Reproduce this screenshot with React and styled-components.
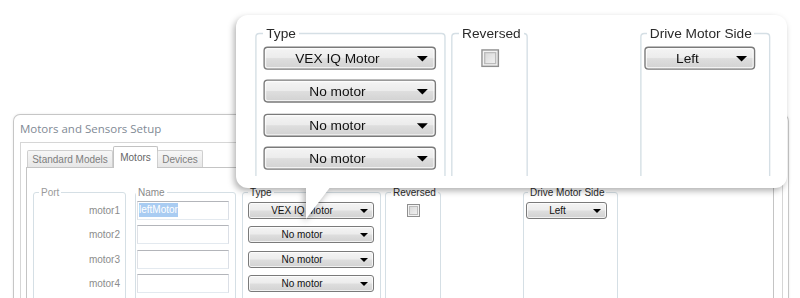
import React from 'react';
import styled, { createGlobalStyle } from 'styled-components';

const GlobalStyle = createGlobalStyle`
  html, body { margin: 0; padding: 0; background: #fff; }
  body { font-family: "Liberation Sans", Arial, sans-serif; }
`;

const Stage = styled.div`
  position: relative;
  width: 800px;
  height: 298px;
  overflow: hidden;
  background: #fff;
  box-sizing: border-box;
  padding: 114px 0 0 13px;
`;

const Dialog = styled.div`
  box-sizing: border-box;
  width: 776px;
  height: 230px;
  border: 1px solid #c6c6c6;
  border-bottom: none;
  border-radius: 7px 7px 0 0;
  background: #fff;
  padding: 0 5px 0 6px;
  box-shadow: 0 0 3px rgba(0, 0, 0, 0.08);
  display: flex;
  flex-direction: column;
`;

const Title = styled.div`
  height: 27px;
  display: flex;
  align-items: center;
  font-family: "Open Sans", "Noto Sans", sans-serif;
  font-size: 11.5px;
  color: #7f8a95;
`;

const Frame = styled.div`
  flex: 1;
  display: flex;
  flex-direction: column;
  border: 1px solid #d6d6d6;
  padding: 3px 8px 0 5px;
  background: #fff;
`;

const TabStrip = styled.div`
  display: flex;
  align-items: flex-end;
  height: 21px;
  padding-left: 1px;
  position: relative;
  z-index: 1;
`;

const Tab = styled.div`
  box-sizing: border-box;
  width: ${(p) => p.$w}px;
  height: ${(p) => (p.$active ? 22 : 17)}px;
  margin-bottom: ${(p) => (p.$active ? -1 : 0)}px;
  margin-left: ${(p) => p.$ml || 0}px;
  border: 1px solid ${(p) => (p.$active ? '#c2c2c2' : '#cfcfcf')};
  border-bottom: none;
  border-radius: 2px 2px 0 0;
  background: ${(p) => (p.$active ? '#fff' : 'linear-gradient(#f7f7f7, #e7e7e7)')};
  color: ${(p) => (p.$active ? '#666' : '#7e7e7e')};
  font-size: 10px;
  display: flex;
  justify-content: center;
  align-items: ${(p) => (p.$active ? 'flex-start' : 'center')};
  padding-top: ${(p) => (p.$active ? 5 : 0)}px;
  white-space: nowrap;
`;

const Panel = styled.div`
  flex: 1;
  border: 1px solid #c4c4c4;
  background: #fff;
  padding: 19px 0 0 6px;
`;

const GroupRow = styled.div`
  display: flex;
  align-items: flex-start;
`;

const Group = styled.fieldset`
  box-sizing: border-box;
  margin: 0 0 0 ${(p) => p.$ml || 0}px;
  padding: 0;
  width: ${(p) => p.$w}px;
  height: 140px;
  min-width: 0;
  border: 1px solid #d5dfe5;
  border-radius: 3px;
`;

const Legend = styled.legend`
  margin-left: ${(p) => (p.$indent ?? 5)}px;
  padding: 0 2px;
  font-size: 10px;
  line-height: 11px;
  color: ${(p) => p.$color || '#2a2a2a'};
`;

const GroupBody = styled.div`
  display: grid;
  grid-auto-rows: 24.5px;
  align-items: center;
  justify-items: ${(p) => p.$justify || 'start'};
  padding: 0 ${(p) => p.$pr || 0}px 0 ${(p) => p.$pl || 0}px;
`;

const PortLabel = styled.span`
  font-size: 10px;
  color: #8c8c8c;
`;

const TextBox = styled.div`
  box-sizing: border-box;
  width: 92px;
  height: 19px;
  border: 1px solid;
  border-color: #b3b5ba #dbdfe6 #e3e9ef #dfe1e6;
  background: #fff;
  padding: 0 1px;
  display: flex;
  align-items: center;
  font-size: 10px;
`;

const Selection = styled.span`
  background: #a9ccf2;
  color: #fff;
  line-height: 14px;
`;

const Select = styled.div`
  box-sizing: border-box;
  width: ${(p) => p.$w}px;
  height: 17px;
  display: flex;
  align-items: center;
  border: 1px solid #7a7a7a;
  border-radius: 3px;
  background: linear-gradient(to bottom, #f4f4f4 0%, #ececec 48%, #dedede 52%, #d2d2d2 100%);
  box-shadow: inset 0 0 0 1px rgba(255, 255, 255, 0.7);
  font-size: 10px;
  color: #111;
`;

const SelectText = styled.span`
  flex: 1;
  text-align: center;
  white-space: nowrap;
`;

const Caret = styled.span`
  width: 0;
  height: 0;
  border-left: 4px solid transparent;
  border-right: 4px solid transparent;
  border-top: 4px solid #000;
  margin: 1px 5px 0 5px;
`;

const CheckBox = styled.div`
  box-sizing: border-box;
  width: 13px;
  height: 13px;
  border: 1px solid #8f8f8f;
  background: linear-gradient(135deg, #d4d4d4 0%, #f6f6f6 100%);
  box-shadow: inset 0 0 0 1px #f3f3f3, inset 0 0 0 2px #bcbcbc;
`;

const Callout = styled.div`
  position: absolute;
  left: 236px;
  top: 15px;
  width: 551px;
  filter: drop-shadow(-2px 3px 3px rgba(0, 0, 0, 0.3));
`;

const Bubble = styled.div`
  box-sizing: border-box;
  height: 173px;
  border-radius: 12px;
  background: #fff;
  overflow: hidden;
  padding-left: 11px;
`;

const Lens = styled.div`
  width: 539px;
  height: 161px;
  overflow: hidden;
`;

const Magnified = styled.div`
  width: 400px;
  padding-top: 7.9px;
  transform: scale(1.37);
  transform-origin: 0 0;
`;

const Tail = styled.div`
  width: 25px;
  height: 33px;
  margin: -2px 0 0 70px;
  background: #fff;
  clip-path: polygon(0 0, 100% 0, 0 100%);
`;

const motors = [
  { port: 'motor1', name: 'leftMotor', type: 'VEX IQ Motor' },
  { port: 'motor2', name: '', type: 'No motor' },
  { port: 'motor3', name: '', type: 'No motor' },
  { port: 'motor4', name: '', type: 'No motor' },
];

function Dropdown({ w, children }) {
  return (
    <Select $w={w}>
      <SelectText>{children}</SelectText>
      <Caret />
    </Select>
  );
}

function MotorGroups() {
  return (
    <>
      <Group $w={139} $ml={6}>
        <Legend>Type</Legend>
        <GroupBody $pl={5}>
          {motors.map((m) => (
            <Dropdown key={m.port} w={126}>{m.type}</Dropdown>
          ))}
        </GroupBody>
      </Group>
      <Group $w={56} $ml={4}>
        <Legend>Reversed</Legend>
        <GroupBody $justify="center">
          <CheckBox />
        </GroupBody>
      </Group>
      <Group $w={95} $ml={82}>
        <Legend $indent={4}>Drive Motor Side</Legend>
        <GroupBody $pl={2}>
          <Dropdown w={81}>Left</Dropdown>
        </GroupBody>
      </Group>
    </>
  );
}

export default function App() {
  return (
    <>
      <GlobalStyle />
      <Stage>
        <Dialog>
          <Title>Motors and Sensors Setup</Title>
          <Frame>
            <TabStrip>
              <Tab $w={86}>Standard Models</Tab>
              <Tab $w={45} $active>Motors</Tab>
              <Tab $w={46} $ml={-1}>Devices</Tab>
            </TabStrip>
            <Panel>
              <GroupRow>
                <Group $w={93}>
                  <Legend $color="#9a9a9a">Port</Legend>
                  <GroupBody $justify="end" $pr={5}>
                    {motors.map((m) => (
                      <PortLabel key={m.port}>{m.port}</PortLabel>
                    ))}
                  </GroupBody>
                </Group>
                <Group $w={101} $ml={9}>
                  <Legend $indent={0} $color="#8a8a8a">Name</Legend>
                  <GroupBody $pl={1}>
                    {motors.map((m) => (
                      <TextBox key={m.port}>
                        {m.name && <Selection>{m.name}</Selection>}
                      </TextBox>
                    ))}
                  </GroupBody>
                </Group>
                <MotorGroups />
              </GroupRow>
            </Panel>
          </Frame>
        </Dialog>

        <Callout>
          <Bubble>
            <Lens>
              <Magnified>
                <GroupRow>
                  <MotorGroups />
                </GroupRow>
              </Magnified>
            </Lens>
          </Bubble>
          <Tail />
        </Callout>
      </Stage>
    </>
  );
}
